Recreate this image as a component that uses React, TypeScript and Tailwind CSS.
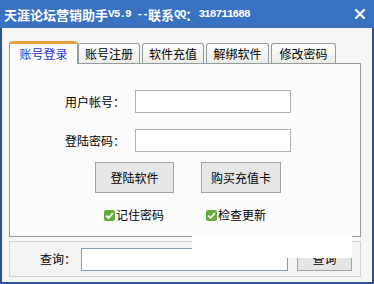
const cjk = "font-['Noto_Sans_CJK_SC','Noto_Sans',sans-serif]";
const mono = "font-['Liberation_Mono','Noto_Sans_CJK_SC',monospace]";

const tabs = [
  { label: "账号注册", w: "w-[62px]" },
  { label: "软件充值", w: "w-[62px]" },
  { label: "解绑软件", w: "w-[63px]" },
  { label: "修改密码", w: "w-[65px]" },
];

function Check() {
  return (
    <span className="flex h-[11px] w-[11px] items-center justify-center rounded-[2px] bg-[#62ae3c]">
      <svg viewBox="0 0 11 11" className="h-[11px] w-[11px]">
        <path d="M2.2 5.7 4.6 8 8.9 3" fill="none" stroke="white" strokeWidth="1.8" />
      </svg>
    </span>
  );
}

export default function App() {
  return (
    <div className={`relative flex h-[284px] w-[374px] flex-col bg-[#3a72c2] text-[12px] text-black ${cjk}`}>
      {/* title bar */}
      <div className="flex h-[28px] items-center justify-between pl-[4px] pr-[9px] text-white">
        <div className="flex items-center font-bold leading-none">
          <span className="text-[13px]">天涯论坛营销助手</span>
          <span className={`${mono} text-[11px] tracking-[-0.9px]`}>V5.9 --</span>
          <span className="text-[13px]">联系</span>
          <span className={`${mono} text-[11px] tracking-[-0.9px]`}>QQ</span>
          <span className="text-[13px]">：</span>
          <span className={`${mono} text-[11px] tracking-[-0.9px]`}>318711688</span>
        </div>
        <svg viewBox="0 0 10 10" className="h-[10px] w-[10px]">
          <path d="M1 1 9 9M9 1 1 9" stroke="white" strokeWidth="2.2" strokeLinecap="square" />
        </svg>
      </div>

      {/* window body */}
      <div className="flex flex-1 flex-col border-x-2 border-b-2 border-[#2b5590] bg-[#f6f6f6] pl-[7px] pt-[13px]">
        {/* tab strip */}
        <div className="relative z-10 flex h-[23px] items-end">
          <div className="flex h-[23px] w-[69px] flex-col rounded-t-[3px] border-x border-[#919b9c] bg-[#fcfcfc]">
            <div className="h-[3px] rounded-t-[3px] bg-[#e6a03a]" />
            <div className="flex flex-1 items-center justify-center pb-[1px] text-[#1a35d8]">账号登录</div>
          </div>
          {tabs.map((t, i) => (
            <div
              key={t.label}
              className={`${t.w} ${i === 0 ? "" : "ml-[2px]"} mb-px flex h-[20px] items-center justify-center rounded-t-[3px] border-x border-t border-[#919b9c] bg-gradient-to-b from-white to-[#ebebe6]`}
            >
              {t.label}
            </div>
          ))}
        </div>

        {/* tab panel */}
        <div className="-mt-px flex h-[174px] w-[352px] flex-col border border-[#919b9c] bg-[#fcfcfc] pt-[26px]">
          <div className="flex items-center pl-[55px]">
            <span className="w-[70px]">用户帐号：</span>
            <div className="h-[23px] w-[156px] border border-[#b0b0b0] bg-white" />
          </div>
          <div className="mt-[16px] flex items-center pl-[55px]">
            <span className="w-[70px]">登陆密码：</span>
            <div className="h-[23px] w-[156px] border border-[#b0b0b0] bg-white" />
          </div>
          <div className="mt-[10px] flex pl-[85px]">
            <div className="flex h-[31px] w-[79px] items-center justify-center border border-[#a2a2a2] bg-[#e6e6e6]">登陆软件</div>
            <div className="ml-[27px] flex h-[31px] w-[80px] items-center justify-center border border-[#a2a2a2] bg-[#e6e6e6]">购买充值卡</div>
          </div>
          <div className="mt-[13px] flex h-[18px] items-center pl-[94px]">
            <Check />
            <span className="ml-[1px]">记住密码</span>
            <span className="ml-[42px]"><Check /></span>
            <span className="ml-[1px]">检查更新</span>
          </div>
        </div>

        {/* query group */}
        <div className="mt-[4px] flex h-[36px] w-[352px] items-center border border-[#d2d2d2] bg-[#f4f4f4]">
          <span className="ml-[30px] w-[41px]">查询：</span>
          <div className="h-[23px] w-[207px] border border-[#7f9db9] bg-white" />
          <div className="ml-[9px] flex h-[23px] w-[55px] items-center justify-center border border-[#a2a2a2] bg-[#e6e6e6]">查询</div>
        </div>
      </div>

      {/* repaint glitch over the lower right */}
      <div className="absolute left-[192px] top-[236px] h-[22px] w-[160px] bg-white" />
    </div>
  );
}
